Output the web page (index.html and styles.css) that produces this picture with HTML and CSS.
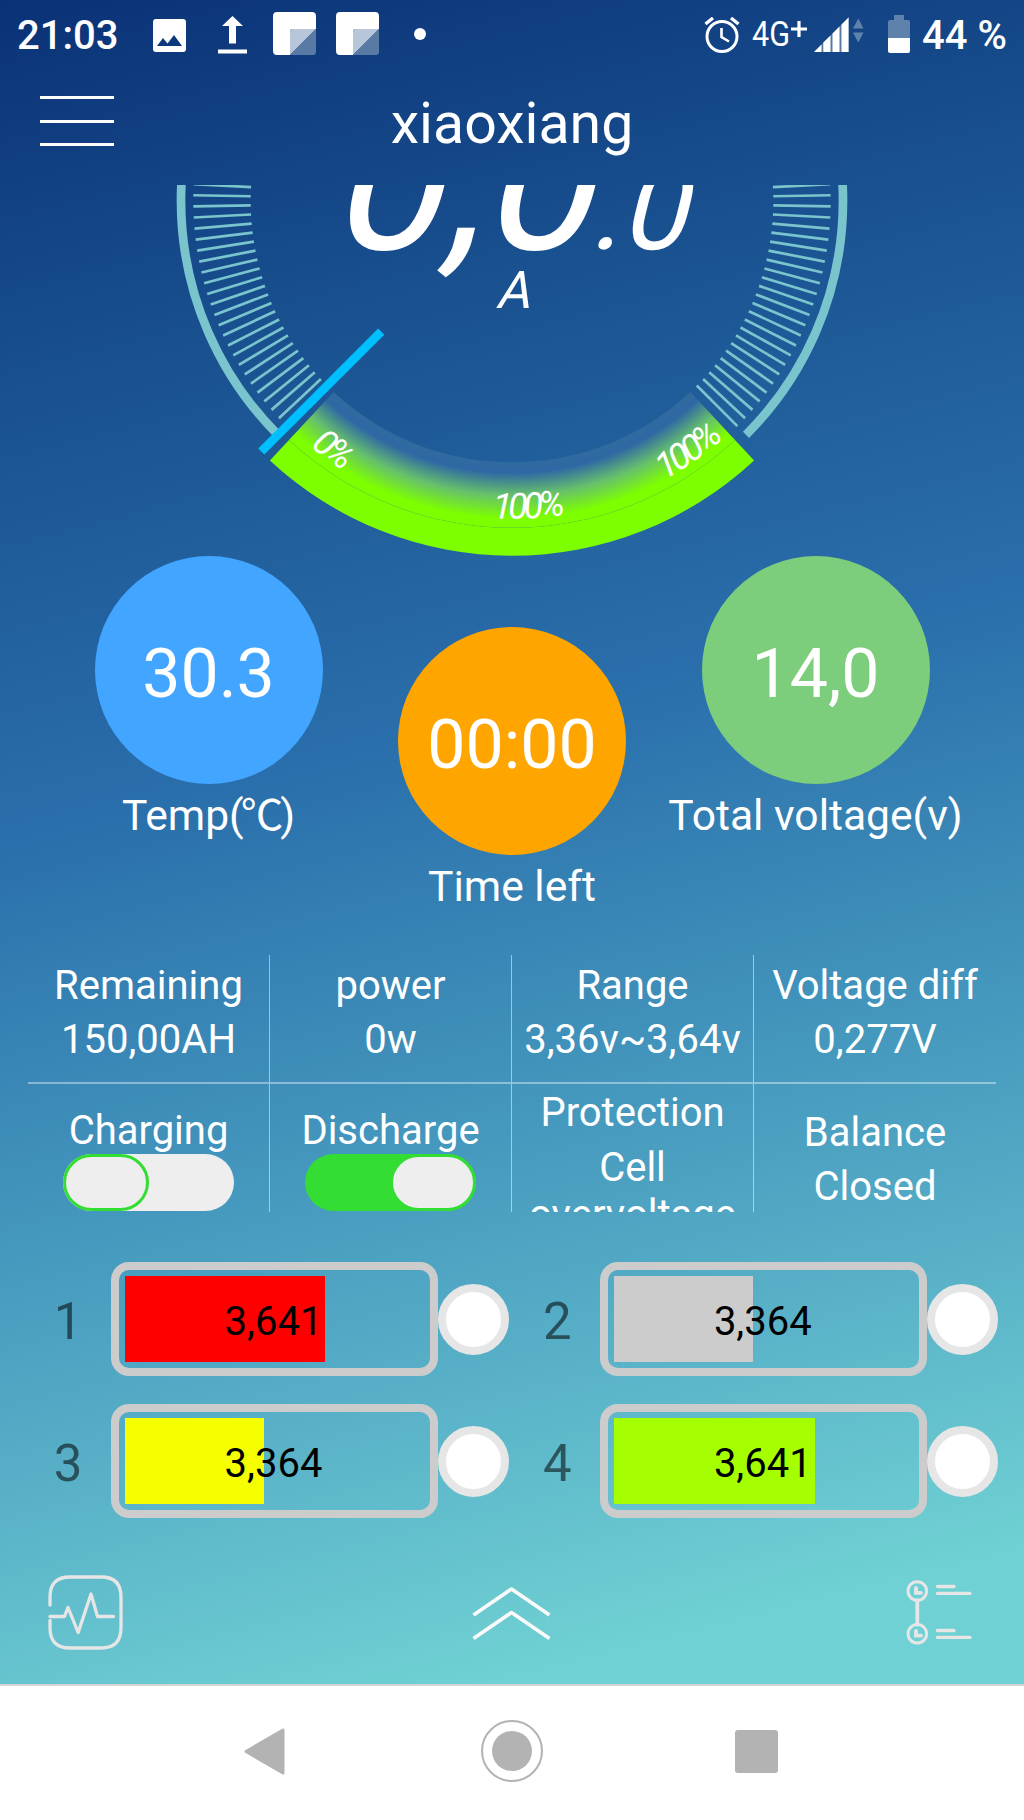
FILE: index.html
```html
<!DOCTYPE html>
<html lang="en">
<head>
    <meta charset="UTF-8">
    <meta name="viewport" content="width=device-width, initial-scale=1.0">
    <title>xiaoxiang</title>
    <link rel="stylesheet" href="styles.css">
</head>
<body>
    <div class="app">
        <div class="status-bar">
            <span class="clock">21:03</span>
            <svg class="icon-photo" width="33" height="33" viewBox="0 0 33 33">
                <path fill="#fff" fill-rule="evenodd" d="M3 0H30Q33 0 33 3V30Q33 33 30 33H3Q0 33 0 30V3Q0 0 3 0ZM4 27H29L21 16L14.500 24.500L10 19Z"/>
            </svg>
            <svg class="icon-upload" width="29" height="38" viewBox="0 0 29 38">
                <path fill="#fff" d="M14.500 0L25 10H18V27.500H11V10H4ZM0 33.500H29V37.500H0Z"/>
            </svg>
            <svg class="icon-note" width="43" height="43" viewBox="0 0 43 43">
                <path fill="#fff" d="M4 0H39Q43 0 43 4V17H20Q17 17 17 20V43H4Q0 43 0 39V4Q0 0 4 0Z"/>
                <path fill="#b7c6d9" d="M20 17H43L17 43V20Q17 17 20 17Z"/>
                <path fill="#5a7aa6" d="M43 17V40Q43 43 40 43H17Z"/>
            </svg>
            <svg class="icon-note second" width="43" height="43" viewBox="0 0 43 43">
                <path fill="#fff" d="M4 0H39Q43 0 43 4V17H20Q17 17 17 20V43H4Q0 43 0 39V4Q0 0 4 0Z"/>
                <path fill="#b7c6d9" d="M20 17H43L17 43V20Q17 17 20 17Z"/>
                <path fill="#5a7aa6" d="M43 17V40Q43 43 40 43H17Z"/>
            </svg>
            <span class="dot"></span>
            <svg class="icon-alarm" width="36" height="36" viewBox="0 0 36 36" fill="none" stroke="#fff">
                <circle cx="18" cy="19.500" r="15" stroke-width="3"/>
                <path d="M17.500 11V20L25 24.500" stroke-width="2.600"/>
                <path d="M1.500 7L9 1M27 1L34.500 7" stroke-width="3.400"/>
            </svg>
            <svg class="icon-4g" width="56" height="36" viewBox="0 0 56 36">
                <text x="0" y="29" textLength="38" lengthAdjust="spacingAndGlyphs">4G</text>
                <path d="M47 4V20M39 12H55" stroke="#fff" stroke-width="3.200"/>
            </svg>
            <svg class="icon-signal" width="50" height="36" viewBox="0 0 50 36">
                <path d="M0 35L35 0V35Z" fill="#5a7aa6"/>
                <path d="M0 35L7.500 27.500V35ZM9.300 35V25.500L16.500 18.500V35ZM18.500 35V16.500L25.500 9.500V35ZM27.500 35V7.500L34.500 .5V35Z" fill="#fff"/>
                <path d="M39 11.500L44.300 1.500L49.500 11.500ZM39 15.500L44.300 25.500L49.500 15.500Z" fill="#5f82ad"/>
            </svg>
            <svg class="icon-battery" width="22" height="38" viewBox="0 0 22 38">
                <path d="M6 0H16V5H20Q22 5 22 7V23H0V7Q0 5 2 5H6Z" fill="#5f82ad"/>
                <path d="M0 23H22V36Q22 38 20 38H2Q0 38 0 36Z" fill="#fff"/>
            </svg>
            <span class="percent">44 %</span>
        </div>

        <div class="header">
            <div class="menu"><span></span><span></span><span></span></div>
            <h1>xiaoxiang</h1>
        </div>

        <svg class="gauge" width="1024" height="371" viewBox="0 185 1024 371">
            <defs>
                <radialGradient id="glow" gradientUnits="userSpaceOnUse" cx="512" cy="200.800" r="327">
                    <stop offset="0.800" stop-color="#306b9f"/>
                    <stop offset="0.832" stop-color="#2f68a4"/>
                    <stop offset="0.900" stop-color="#66c06c"/>
                    <stop offset="0.972" stop-color="#7dff00"/>
                </radialGradient>
                <path id="label-arc" d="M287.150 425.650A318 318 0 0 0 736.850 425.650"/>
            </defs>
            <path class="ring" d="M278 434.800A331 331 0 1 1 746 434.800"/>
            <g id="ticks"></g>
            <path fill="url(#glow)" d="M333.600 392.100A261.500 261.500 0 0 0 690.400 392.100L735 440A327 327 0 0 1 289 440Z"/>
            <path fill="#7dff00" d="M289 440A327 327 0 0 0 735 440L754.100 460.400A355 355 0 0 1 269.900 460.400Z"/>
            <path class="hairline" d="M289 440A327 327 0 0 0 735 440"/>
            <path class="needle" d="M261.300 451.500L381.200 331.600"/>
            <text class="arc-label"><textPath href="#label-arc" startOffset="31">0%</textPath></text>
            <text class="arc-label"><textPath href="#label-arc" startOffset="230">100%</textPath></text>
            <text class="arc-label"><textPath href="#label-arc" startOffset="408">100%</textPath></text>
            <g class="reading" transform="translate(328 248.500) skewX(-14)">
                <text class="amps">0,0</text>
                <text class="amps-small" x="261">.0</text>
            </g>
            <text class="amps-unit" transform="translate(512.500 307.500) skewX(-14)">A</text>
        </svg>

        <div class="circles">
            <div class="stat">
                <div class="circle blue">30.3</div>
                <p>Temp(<span class="unit">℃</span>)</p>
            </div>
            <div class="stat lower">
                <div class="circle orange">00:00</div>
                <p>Time left</p>
            </div>
            <div class="stat">
                <div class="circle green">14,0</div>
                <p>Total voltage(v)</p>
            </div>
        </div>

        <div class="info">
            <div class="info-cell"><span>Remaining</span><span>150,00AH</span></div>
            <div class="info-cell"><span>power</span><span>0w</span></div>
            <div class="info-cell"><span>Range</span><span>3,36v~3,64v</span></div>
            <div class="info-cell"><span>Voltage diff</span><span>0,277V</span></div>
            <div class="info-cell switch-cell"><span>Charging</span><div class="switch"><i></i></div></div>
            <div class="info-cell switch-cell"><span>Discharge</span><div class="switch on"><i></i></div></div>
            <div class="info-cell long"><span>Protection</span><p>Cell<br>overvoltage</p></div>
            <div class="info-cell state"><span>Balance</span><span>Closed</span></div>
        </div>

        <div class="cells">
            <div class="cell">
                <span class="number">1</span>
                <div class="battery"><div class="fill red" style="width: 67%"></div><span>3,641</span></div>
                <div class="bulb"></div>
            </div>
            <div class="cell">
                <span class="number">2</span>
                <div class="battery"><div class="fill gray" style="width: 46.4%"></div><span>3,364</span></div>
                <div class="bulb"></div>
            </div>
            <div class="cell">
                <span class="number">3</span>
                <div class="battery"><div class="fill yellow" style="width: 46.4%"></div><span>3,364</span></div>
                <div class="bulb"></div>
            </div>
            <div class="cell">
                <span class="number">4</span>
                <div class="battery"><div class="fill lime" style="width: 67%"></div><span>3,641</span></div>
                <div class="bulb"></div>
            </div>
        </div>

        <div class="tabs">
            <svg width="75" height="75" viewBox="0 0 75 75" fill="none" stroke="#e6e6e6" stroke-width="3.300" stroke-linecap="round" stroke-linejoin="round">
                <path d="M2 30V22Q2 2 22 2H53Q73 2 73 22V53Q73 73 53 73H22Q2 73 2 53V45.500"/>
                <path d="M2 41.500H16.500L20 32.500L30.200 57.500L43 19L49.500 41.500H65.500"/>
            </svg>
            <svg class="chevrons" width="79" height="55" viewBox="0 0 79 55" fill="none" stroke="#fafafa" stroke-width="3.600" stroke-linejoin="round">
                <path d="M1.500 29L39.500 3L77.500 29M1.500 52.500L39.500 26.500L77.500 52.500"/>
            </svg>
            <svg width="66" height="66" viewBox="0 0 66 66" fill="none" stroke="#e6e6e6" stroke-width="3" stroke-linecap="round">
                <circle cx="11.300" cy="12" r="9.300"/>
                <circle cx="11.300" cy="54.800" r="9.300"/>
                <path stroke-width="3.800" d="M11.300 21.500V45.500M10 9V13.800H15M10 51.800V56.600H15"/>
                <path stroke-width="3.400" d="M31.500 7.500H48M31.500 14.400H64M31.500 51.500H48M31.500 58.400H64"/>
            </svg>
        </div>
    </div>

    <div class="nav-bar">
        <svg width="41" height="47" viewBox="0 0 41 47"><path d="M2 23.500L39 2V45Z" fill="#b3b3b3" stroke="#b3b3b3" stroke-width="3" stroke-linejoin="round"/></svg>
        <svg class="home" width="64" height="64" viewBox="0 0 64 64"><circle cx="32" cy="32" r="30" fill="none" stroke="#b3b3b3" stroke-width="2"/><circle cx="32" cy="32" r="20" fill="#b3b3b3"/></svg>
        <svg width="43" height="43" viewBox="0 0 43 43"><rect width="43" height="43" rx="3" fill="#b3b3b3"/></svg>
    </div>

    <script>
        // one tick every 2 degrees, open at the bottom
        const ticks = document.getElementById("ticks");
        for (let deg = 135; deg <= 405; deg += 2) {
            const line = document.createElementNS("http://www.w3.org/2000/svg", "line");
            const a = deg * Math.PI / 180;
            line.setAttribute("x1", 512 + 261.3 * Math.cos(a));
            line.setAttribute("y1", 200.8 + 261.3 * Math.sin(a));
            line.setAttribute("x2", 512 + 318.7 * Math.cos(a));
            line.setAttribute("y2", 200.8 + 318.7 * Math.sin(a));
            ticks.appendChild(line);
        }
    </script>
</body>
</html>
```
FILE: styles.css
```css
* { box-sizing: border-box; }
body { margin: 0; font-family: Roboto, "Noto Sans CJK SC", sans-serif; color: #fff; background: #fff; }
svg { display: block; flex: none; }
.app { height: 1684px; background: linear-gradient(166deg, #0a3276 0%, #19508f 20%, #2a70ac 44%, #4497bd 64%, #5bb4c9 79%, #6fd1d3 93%); overflow: hidden; }

.status-bar { display: flex; align-items: center; height: 70px; padding: 0 18px 0 17px; }
.clock, .percent { font-size: 40px; font-weight: 500; line-height: 47px; }
.clock { width: 101px; }
.icon-photo { margin-left: 35px; }
.icon-upload { margin-left: 32px; }
.icon-note { margin: -3px 0 0 26px; }
.icon-note.second { margin-left: 20px; }
.dot { width: 12px; height: 12px; border-radius: 50%; background: #fff; margin: -2px 0 0 35px; }
.icon-alarm { margin-left: auto; }
.icon-4g { margin-left: 12px; fill: #fff; font-size: 35px; overflow: visible; }
.icon-signal { margin-left: 6px; }
.icon-battery { margin: -2px 0 0 24px; }
.percent { margin-left: 12px; width: 84px; white-space: nowrap; }

.header { display: grid; grid-template-columns: 74px 1fr 74px; align-items: center; height: 115px; padding: 0 40px 13px; }
.header h1 { margin: 5px 0 0; font-size: 57.200px; font-weight: 400; text-align: center; line-height: 66px; }
.menu { display: flex; flex-direction: column; gap: 20.500px; }
.menu span { height: 3px; background: #fff; }

.gauge .ring { fill: none; stroke: #7ac5cd; stroke-width: 8.700; }
.gauge line { stroke: #7ac5cd; stroke-width: 2.700; }
.gauge .needle { stroke: #00bfff; stroke-width: 8.700; }
.gauge .hairline { fill: none; stroke: #6fe01c; stroke-width: 0.500; opacity: 0.400; }
.gauge text { fill: #fff; }
.arc-label { font-size: 36px; font-style: italic; letter-spacing: -3.700px; }
.amps { font-size: 199px; }
.amps-small { font-size: 117px; }
.amps-unit { font-size: 52px; text-anchor: middle; }

.circles { display: grid; grid-template-columns: repeat(3, 303.500px); justify-content: center; height: 399px; }
.stat { display: flex; flex-direction: column; align-items: center; }
.stat.lower { padding-top: 71px; }
.circle { width: 228px; height: 228px; border-radius: 50%; display: flex; align-items: center; justify-content: center; font-size: 68px; padding-top: 7px; }
.blue { background: #42a5ff; }
.orange { background: #ffa500; }
.green { background: #7ccd7c; }
.stat p { margin: 5px 0 0; font-size: 42.600px; line-height: 52px; white-space: nowrap; }
.unit { margin: 0 -3px; }

.info { display: grid; grid-template-columns: repeat(4, 1fr); grid-template-rows: 129px 127.500px; margin: 0 28px; font-size: 40px; line-height: 54px; overflow: hidden; }
.info-cell { display: flex; flex-direction: column; align-items: center; padding-top: 2px; border-right: 1px solid rgba(255,255,255,0.5); overflow: hidden; white-space: nowrap; }
.info-cell:nth-child(4n) { border-right: none; }
.info-cell:nth-child(-n+4) { border-bottom: 2px solid rgba(255,255,255,0.4); padding-top: 4px; }
.info-cell.switch-cell { padding-top: 20px; }
.info-cell.state { padding-top: 22px; }
.info-cell p { margin: 4px 0 0; line-height: 47px; text-align: center; }
.switch-cell span { line-height: 54px; margin-bottom: -4px; }
.switch { width: 171px; height: 57px; border-radius: 29px; background: #eee; display: flex; flex: none; }
.switch i { width: 86px; height: 57px; border: 3px solid #33dd33; border-radius: 29px; background: #eee; }
.switch.on { background: #33dd33; justify-content: flex-end; }

.cells { display: grid; grid-template-columns: 489.300px 489.300px; row-gap: 28px; padding: 50.500px 0 0 25px; }
.cell { display: flex; align-items: center; }
.number { width: 86px; margin-top: 6px; text-align: center; font-size: 51px; line-height: 60px; color: rgba(0,0,0,0.54); }
.battery { position: relative; width: 327px; height: 114px; padding: 6px; border: 8.700px solid #ccc; border-radius: 18px; display: flex; }
.battery .fill { height: 100%; }
.battery span { position: absolute; inset: 4px 2px 0 0; display: flex; align-items: center; justify-content: center; font-size: 40px; color: #000; }
.red { background: #ff0000; }
.gray { background: #cccccc; }
.yellow { background: #f6ff00; }
.lime { background: #a5ff00; }
.bulb { width: 71px; height: 71px; border: 8px solid #e6e6e6; border-radius: 50%; background: #fff; }

.tabs { display: flex; align-items: center; justify-content: space-between; padding: 0 52px 0 48px; margin-top: 56.500px; height: 75px; }
.chevrons { margin: 2px 7px 0 0; }

.nav-bar { height: 136px; padding: 0 2px 4px 0; border-top: 2px solid #d5d5d5; background: #fff; display: flex; align-items: center; justify-content: center; }
.home { margin: 0 191px 0 195px; }
```
